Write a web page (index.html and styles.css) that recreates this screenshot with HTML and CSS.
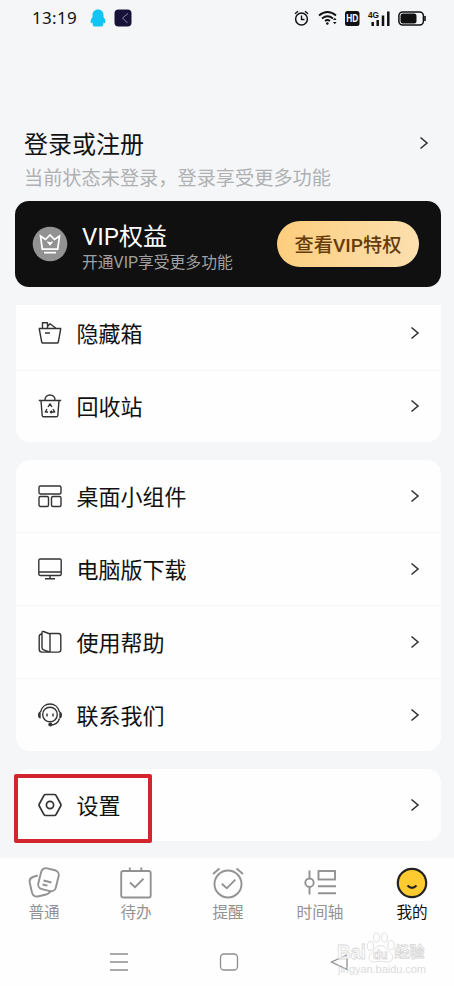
FILE: index.html
```html
<!DOCTYPE html>
<html lang="zh-CN">
<head>
<meta charset="utf-8">
<title>我的</title>
<link rel="stylesheet" href="styles.css">
</head>
<body>
<svg class="defs" width="0" height="0"><symbol id="chevron" viewBox="0 0 10 14"><path d="M1.500 1.500 8 7 1.500 12.500" fill="none" stroke="currentColor" stroke-width="1.600"/></symbol></svg>
<div class="phone">
  <header class="status">
    <span class="clock">13:19</span>
    <svg class="penguin" width="16" height="18" viewBox="0 0 16 18"><path d="M8 .5C4.500.5 2.500 3 2.500 6v2C1.200 9.500.2 12 .8 14c.6.4 1.300-.2 1.700-.8 0 1.300.2 2.200.5 3.200q.2 1 1.200 1h7.600q1 0 1.200-1c.3-1 .5-1.900.5-3.200.4.6 1.100 1.200 1.700.8.6-2-.4-4.500-1.700-6V6c0-3-2-5.500-5.500-5.500z" fill="#10c5f4"/></svg>
    <svg class="appdot" width="18" height="18" viewBox="0 0 18 18"><rect x=".5" y=".5" width="17" height="17" rx="4" fill="#171338"/><path d="M14 4.500 8.500 9l5 5" fill="none" stroke="#8b88a5" stroke-width="1"/></svg>
    <svg class="signals" width="134" height="20" viewBox="0 0 134 20" fill="none" stroke="#111">
      <circle cx="7.500" cy="11" r="5.900" stroke-width="1.500"/><path d="M7.500 7.500v4h3M1 5.800 4 3.300M14 5.800 11 3.300" stroke-width="1.400"/>
      <path d="M25 7.500q8.500-7 17 0M28 10.500q5.500-4.500 11 0M31 13q2.500-2 5 0" stroke-width="1.800"/><circle cx="33.300" cy="15.500" r="1.300" fill="#111" stroke="none"/><path d="m39 12 1.800-2.200L42.600 12zM39 14h3.600l-1.800 2.300z" fill="#111" stroke="none"/>
      <rect x="51" y="3" width="14.500" height="15" rx="2.500" fill="#111" stroke="none"/>
      <text x="52.200" y="14.300" class="hd" textLength="12" lengthAdjust="spacingAndGlyphs">HD</text>
      <text x="74" y="10" class="net" textLength="11" lengthAdjust="spacingAndGlyphs">4G</text>
      <path d="M78.700 14v4M83.700 12v6M89 7.500V18M94.300 3.500V18" stroke-width="2.500"/>
      <rect x="104.900" y="3.900" width="24.500" height="13.200" rx="3.800" stroke-width="1.500"/><rect x="106.500" y="5.500" width="16" height="10" rx="2.500" fill="#111" stroke="none"/><path d="M131 8v5" stroke-width="1.600"/>
    </svg>
  </header>

  <section class="account">
    <div><h1>登录或注册</h1><p>当前状态未登录，登录享受更多功能</p></div>
    <svg class="arrow"><use href="#chevron"/></svg>
  </section>

  <section class="vip">
    <svg class="crown" width="36" height="36" viewBox="0 0 36 36"><circle cx="18" cy="18" r="17.300" fill="#929292"/><path d="m8.500 10 5 3.500L18 9l4.500 4.500 5-3.500-1.800 13.200H10.300zM12 26.700h12" fill="none" stroke="#fff" stroke-width="1.700"/><path d="m15.500 15.800 2.500 3.400 2.500-3.400-2.500 1z" fill="#fff" stroke="#fff"/></svg>
    <div class="vip-copy"><h2><span class="latin">VIP</span>权益</h2><p>开通<span class="latin">VIP</span>享受更多功能</p></div>
    <button class="vip-button">查看<span class="latin">VIP</span>特权</button>
  </section>

  <main>
    <ul class="card clipped">
      <li><svg class="icon" viewBox="0 0 24 24"><path d="M.8 7.500h22.400M1.200 7.500 3.700 21q.2 1 1.300 1h14q1.100 0 1.300-1L22.800 7.500M4.500 7.300V1.700h5v5.600M9.500 5.500l2.500-2.700 6 4.500M7 12h5"/></svg><span>隐藏箱</span><svg class="arrow"><use href="#chevron"/></svg></li>
      <li><svg class="icon" viewBox="0 0 24 24"><path d="M.8 6.500h22.400M3 6.500l1.200 15q.1 1.300 1.400 1.300h12.800q1.300 0 1.400-1.300l1.200-15M7 6.300C6.500-.8 17.500-.8 17 6.300"/><path d="m10 13 2-3.200 2 3.200M15 15l1.700 3h-4M10 18H7.300L9 15M13.800 16.700 12.300 18l1.500 1.300"/></svg><span>回收站</span><svg class="arrow"><use href="#chevron"/></svg></li>
    </ul>
    <ul class="card">
      <li><svg class="icon" viewBox="0 0 24 24"><rect x="1" y="2" width="22" height="8" rx="1.500"/><rect x="1" y="12.500" width="9.500" height="10" rx="1.500"/><rect x="13.500" y="12.500" width="9.500" height="10" rx="1.500"/></svg><span>桌面小组件</span><svg class="arrow"><use href="#chevron"/></svg></li>
      <li><svg class="icon" viewBox="0 0 24 24"><rect x=".8" y="2" width="22.400" height="16.500" rx="1.500"/><path d="M1 15h22M12 18.500v3M7 21.700h10"/></svg><span>电脑版下载</span><svg class="arrow"><use href="#chevron"/></svg></li>
      <li><svg class="icon" viewBox="0 0 24 24"><path d="M12 3.500h8.500q2.300 0 2.300 2.300v14q0 2.300-2.300 2.300H12zM4 3.800Q1.200 4.300 1.200 6.500v12.800q0 2.800 2.800 2.800h8M4 2.500q0-1.500 1.500-1L12 4v18.100l-6.500-2.300Q4 19.300 4 17.500z"/></svg><span>使用帮助</span><svg class="arrow"><use href="#chevron"/></svg></li>
      <li><svg class="icon" viewBox="0 0 24 24"><circle cx="12" cy="11.500" r="7.300"/><path d="M2.500 9C5-1.700 19-1.700 21.500 9M21.500 15.500q-2 6-8 6.500M9 10.500v3M15 10.500v3"/><path d="M2.700 8.500Q0 8.500 0 12t2.700 3.500zM21.300 8.500Q24 8.500 24 12t-2.700 3.500z" fill="#333" stroke="none"/><circle cx="12.300" cy="21.500" r="2" fill="#333" stroke="none"/></svg><span>联系我们</span><svg class="arrow"><use href="#chevron"/></svg></li>
    </ul>
    <ul class="card settings">
      <li><svg class="icon bold" viewBox="0 0 24 24"><path d="M7.500 1.500h9q1 0 1.500.9l4.700 8.600q.5 1 0 2L18 21.600q-.5.9-1.500.9h-9q-1 0-1.500-.9L1.300 13q-.5-1 0-2L6 2.400q.5-.9 1.500-.9z"/><circle cx="12" cy="12" r="3.600"/></svg><span>设置</span><svg class="arrow"><use href="#chevron"/></svg><i class="highlight"></i></li>
    </ul>
  </main>

  <nav class="tabs">
    <a><svg viewBox="0 0 32 32"><rect x="11.500" y="2" width="18" height="21.500" rx="5" transform="rotate(14 20.700 12.700)"/><path d="M9.800 8.500 4.800 10Q1 11.500 1.700 15.500L4 25.500q1.200 4.500 5.700 4l7.500-1.700q4-1 5.500-4M15.500 13.500l8 2M14.500 17.500l5 1.200"/></svg><span>普通</span></a>
    <a><svg viewBox="0 0 32 32"><rect x="1.200" y="4" width="29.500" height="26.500" rx="2"/><path d="M9.800 .5V4M21.300 .5V4M10 15.500l5 4.700 8.500-8.400"/></svg><span>待办</span></a>
    <a><svg viewBox="0 0 32 32"><circle cx="16" cy="17" r="13.500"/><path d="m9.800 16.700 5 4.600 8.500-8.600M1 7l6.500-5.500M31 7l-6.500-5.500"/></svg><span>提醒</span></a>
    <a><svg viewBox="0 0 32 32"><path d="M5.500 3.500v8M5.500 20v7.500M14 19.300h18M14 26.200h18"/><circle cx="5.500" cy="15.700" r="4.200"/><rect x="14.500" y="4" width="16.500" height="8.500"/></svg><span>时间轴</span></a>
    <a class="active"><svg viewBox="0 0 32 32"><circle cx="16" cy="16" r="14.200"/><path d="M11.500 18.500q4.500 4.500 9 0"/></svg><span>我的</span></a>
  </nav>

  <footer class="system">
    <svg width="20" height="20" viewBox="0 0 20 20"><path d="M1 2h18M1 10h18M1 18h18"/></svg>
    <svg width="20" height="20" viewBox="0 0 20 20"><rect x="1.500" y="2" width="17" height="16" rx="3.500"/></svg>
    <svg width="20" height="20" viewBox="0 0 20 20"><path d="M18 3 2.500 10 18 17.500z"/></svg>
    <svg class="mark" width="94" height="46" viewBox="0 0 94 46">
      <g fill="#fff" stroke="#d2d2d2" stroke-width=".8">
        <text x="0" y="27.500" class="baidu" textLength="29" lengthAdjust="spacingAndGlyphs">Bai</text>
        <path d="M43.500 14.500c-5 0-6 5-9 7.500-4 3.500-3 9 2 9 3 0 4-.8 7-.8s4 .8 7 .8c5 0 7-5.500 3-9-3-2.500-5-7.500-10-7.500z"/>
        <ellipse cx="33.500" cy="15" rx="3.200" ry="4.500"/><ellipse cx="39.500" cy="6.500" rx="3" ry="4.500"/><ellipse cx="47.500" cy="6.500" rx="3" ry="4.500"/><ellipse cx="54" cy="14" rx="3.200" ry="4.500"/>
        <text x="36" y="28" class="du">du</text>
        <text x="57.500" y="26" class="jingyan">经验</text>
      </g>
      <text x="1" y="42" class="domain" textLength="88">jingyan.baidu.com</text>
    </svg>
  </footer>
</div>
</body>
</html>
```
FILE: styles.css
```css
* { box-sizing: border-box; }
body {
  margin: 0;
  background: #f5f6f8;
  color: #111;
  font-family: "Noto Sans CJK SC", sans-serif;
}
h1, h2, p, ul { margin: 0; padding: 0; font-weight: 400; }
svg { display: block; flex: none; }
.defs { position: absolute; }
.phone { height: 986px; display: flex; flex-direction: column; overflow: hidden; }
.latin { font-family: Roboto, sans-serif; }

.status { height: 36px; padding: 0 26px 0 32px; display: flex; align-items: center; }
.clock { width: 46px; font: 17px/36px "Noto Sans", sans-serif; letter-spacing: .3px; white-space: nowrap; }
.penguin { margin-left: 12px; }
.appdot { margin-left: 8px; }
.signals { margin-left: auto; }
.hd { font: 700 10px "Liberation Sans", sans-serif; fill: #fff; stroke: none; }
.net { font: 700 9px "Liberation Sans", sans-serif; fill: #111; stroke: none; }

.account {
  height: 165px;
  padding: 89px 25px 0 24px;
  display: flex;
  justify-content: space-between;
}
.account h1 { font-size: 24px; line-height: 36px; }
.account p { font-size: 19.2px; line-height: 33px; color: #afb0b2; white-space: nowrap; }
.arrow { width: 10px; height: 14px; color: #333; }
.account .arrow { margin-top: 11px; }

.vip {
  height: 86px;
  margin: 0 13px 0 15px;
  padding: 0 22px 0 17px;
  border-radius: 14px;
  background: #101010;
  color: #fff;
  display: flex;
  align-items: center;
}
.vip-copy { margin-left: 14px; padding-top: 6px; white-space: nowrap; }
.vip h2 { font-size: 24px; line-height: 28px; }
.vip p { font-size: 15.8px; line-height: 22px; color: #a0a0a0; }
.vip-button {
  width: 142px;
  height: 46px;
  margin-left: auto;
  padding: 0;
  border: 0;
  border-radius: 23px;
  background: linear-gradient(100deg, #fdcd7c, #fce0b0);
  color: #643b09;
  font: 500 19.2px/46px "Noto Sans CJK SC", sans-serif;
  white-space: nowrap;
}

main {
  height: 571px;
  padding: 18px 13px 0 16px;
  display: flex;
  flex-direction: column;
  gap: 18px;
}
.card { list-style: none; border-radius: 14px; background: #fefefe; }
.card li {
  height: 73px;
  padding: 0 21px 0 22px;
  display: flex;
  align-items: center;
  font-size: 22px;
  line-height: 32px;
}
.card li:first-child { height: 72px; }
.card li + li { border-top: 1px solid #f4f7f8; }
.card .arrow { margin-left: auto; }
.card span { margin-left: 14.5px; padding-bottom: 2px; }
.card.clipped { border-radius: 0 0 14px 14px; }
.card.clipped li:first-child { height: 65px; padding-bottom: 9px; }
.card.clipped li + li { height: 72px; padding-bottom: 1px; }
.icon { width: 24px; height: 24px; fill: none; stroke: #333; stroke-width: 1.4; stroke-linejoin: round; }
.icon.bold { stroke-width: 1.7; }
.settings li { position: relative; }
.highlight {
  position: absolute;
  left: -2px;
  top: 5px;
  width: 138px;
  height: 69px;
  border: 4px solid #d3252d;
  border-radius: 2px;
}

.tabs { height: 74px; background: #fefefe; display: grid; grid-template-columns: repeat(5, 92px); margin: 0 -4px 0 0; padding-top: 9px; }
.tabs a { display: flex; flex-direction: column; align-items: center; color: #929292; font-size: 15.6px; line-height: 24px; padding-right: 4px; }
.tabs svg { width: 32px; height: 32px; fill: none; stroke: #929292; stroke-width: 1.9; }
.tabs .active { color: #111; }
.tabs .active svg { fill: #fdcb2f; stroke: #222; stroke-width: 2.2; }

.system { position: relative; height: 54px; background: #fefefe; padding: 20px 105px 0 109px; display: flex; justify-content: space-between; fill: none; stroke: #8e8e8e; stroke-width: 1.3; }
.mark { position: absolute; left: 337px; top: -1px; opacity: .85; }
.baidu { font: 700 21px "Liberation Sans", sans-serif; }
.du { font: 700 12px "Liberation Sans", sans-serif; }
.jingyan { font: 700 15px "Noto Sans CJK SC", sans-serif; }
.domain { font: 11px "Liberation Sans", sans-serif; fill: #d6d6d6; stroke: none; }
```
